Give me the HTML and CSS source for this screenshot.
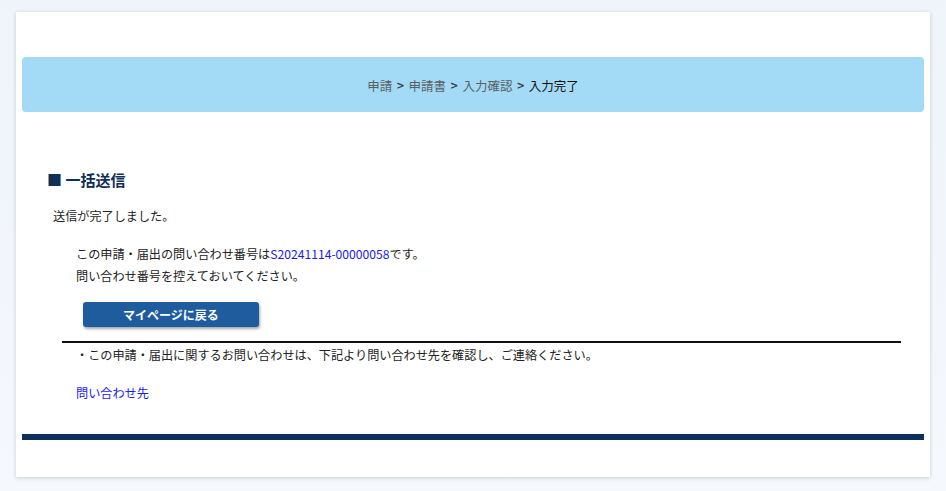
FILE: index.html
```html
<!DOCTYPE html>
<html lang="ja">
<head>
<meta charset="utf-8">
<title>入力完了</title>
<link rel="stylesheet" href="styles.css">
</head>
<body>
<div class="card">
  <nav class="breadcrumb">
    <span class="crumb">申請</span><span class="sep">&gt;</span>
    <span class="crumb">申請書</span><span class="sep">&gt;</span>
    <span class="crumb">入力確認</span><span class="sep">&gt;</span>
    <span class="current">入力完了</span>
  </nav>
  <h2 class="heading">■ 一括送信</h2>
  <p class="done">送信が完了しました。</p>
  <div class="info">
    <p>この申請・届出の問い合わせ番号は<span class="num">S20241114-00000058</span>です。</p>
    <p>問い合わせ番号を控えておいてください。</p>
  </div>
  <button class="btn" type="button">マイページに戻る</button>
  <div class="notice">
    <p>・この申請・届出に関するお問い合わせは、下記より問い合わせ先を確認し、ご連絡ください。</p>
    <a class="contact" href="#">問い合わせ先</a>
  </div>
  <div class="footer-bar"></div>
</div>
</body>
</html>
```
FILE: styles.css
```css
html, body {
  margin: 0;
  padding: 0;
}
body {
  width: 946px;
  height: 491px;
  background: linear-gradient(180deg, #eff4fb 0%, #f5f8fd 100%);
  font-family: "Noto Sans CJK JP", "Noto Sans", sans-serif;
  font-size: 12.15px;
  color: #222;
  padding-top: 12px;
  box-sizing: border-box;
  overflow: hidden;
}
p { margin: 0; }
.card {
  margin-left: 16px;
  width: 914px;
  height: 465px;
  box-sizing: border-box;
  padding: 45px 6px 0 6px;
  background: #fff;
  box-shadow: 0 1px 4px rgba(0, 0, 0, 0.18);
}
.breadcrumb {
  height: 55px;
  background: #a3daf5;
  border-radius: 4px;
  display: flex;
  justify-content: center;
  align-items: center;
  gap: 4px;
  font-size: 12.5px;
  padding-top: 2px;
  box-sizing: border-box;
}
.crumb { color: #5a5f66; }
.sep { color: #3a3f46; font-weight: bold; font-family: "DejaVu Sans", sans-serif; font-size: 10px; }
.current { color: #111; }
.heading {
  margin: 58px 0 0 25px;
  font-size: 15px;
  line-height: 20px;
  font-weight: bold;
  color: #102f58;
}
.done {
  margin: 15px 0 0 31px;
  line-height: 20px;
  padding-top: 1px;
}
.info {
  margin: 17px 0 0 54px;
  line-height: 22px;
}
.num { color: #1a1aee; }
.btn {
  display: block;
  margin: 15px 0 0 61px;
  width: 176px;
  height: 25px;
  border: none;
  border-radius: 3px;
  background: #1f5c9e;
  color: #fff;
  font-family: inherit;
  font-size: 12px;
  font-weight: bold;
  box-shadow: 1px 2px 3px rgba(0, 0, 0, 0.35);
  padding: 0;
}
.notice {
  margin: 14px 0 0 40px;
  width: 839px;
  border-top: 2px solid #111;
  padding-top: 2px;
}
.notice p {
  margin-left: 14px;
  line-height: 20px;
}
.contact {
  display: block;
  margin: 18px 0 0 14px;
  line-height: 20px;
  color: #1a1aee;
  text-decoration: none;
  width: max-content;
}
.footer-bar {
  margin-top: 31px;
  height: 6px;
  background: #0d2f5c;
}
```
